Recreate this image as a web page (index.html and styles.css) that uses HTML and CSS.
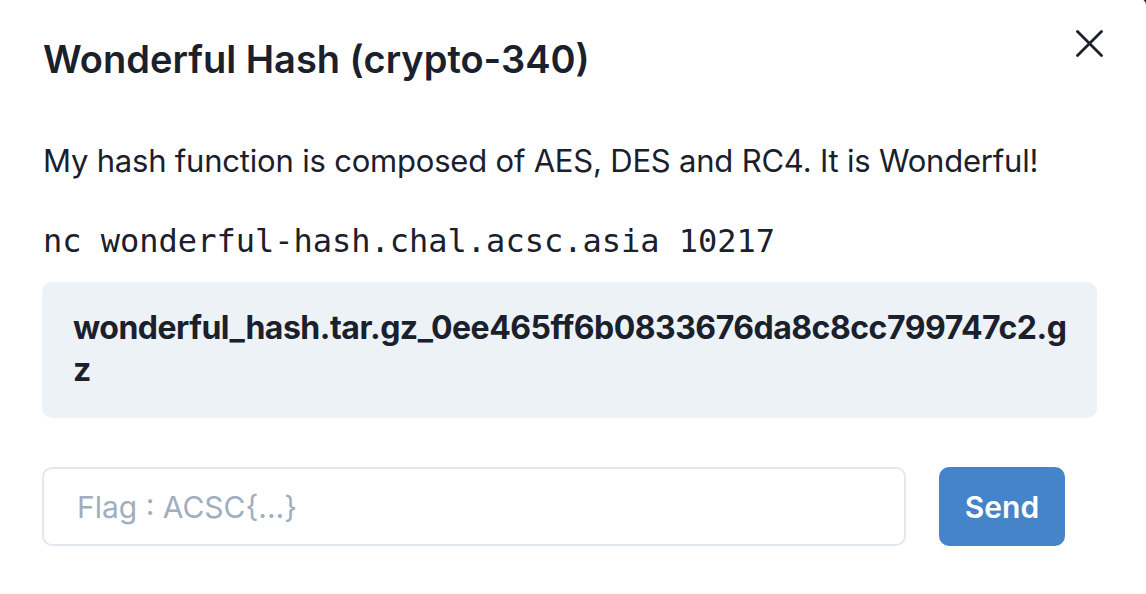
FILE: index.html
```html
<!DOCTYPE html>
<html>
<head>
<meta charset="utf-8">
<link rel="stylesheet" href="styles.css">
</head>
<body>
<div class="modal">
  <header class="header">
    <h2 class="title">Wonderful Hash (crypto-340)</h2>
    <button class="close" aria-label="Close">
      <svg width="27" height="27" viewBox="0 0 27 27"><path d="M1.5 1.5L25.5 25.5M25.5 1.5L1.5 25.5" stroke="#1a202c" stroke-width="2.8" stroke-linecap="round"/></svg>
    </button>
  </header>
  <div class="body">
    <p class="desc">My hash function is composed of AES, DES and RC4. It is Wonderful!</p>
    <p class="cmd">nc wonderful-hash.chal.acsc.asia 10217</p>
    <div class="files">
      <a class="file">wonderful_hash.tar.gz_0ee465ff6b0833676da8c8cc799747c2.gz</a>
    </div>
    <form class="flag-row">
      <input class="flag" type="text" placeholder="Flag : ACSC{...}">
      <button class="send" type="button">Send</button>
    </form>
  </div>
</div>
</body>
</html>
```

FILE: styles.css
```css
html, body {
  margin: 0;
  padding: 0;
}
body {
  background: #1c2538;
  font-family: Inter, "Noto Sans", sans-serif;
  color: #1a202c;
  overflow: hidden;
}
.modal {
  background: #fff;
  margin-top: -1px;
  height: 596px;
  border-top-right-radius: 6px;
  box-sizing: border-box;
}
.header {
  display: flex;
  justify-content: space-between;
  align-items: flex-start;
  padding: 38px 43px 0 43px;
}
.title {
  margin: 0;
  font-size: 38px;
  line-height: 44px;
  font-weight: 600;
  letter-spacing: 0;
}
.close {
  border: 0;
  background: none;
  padding: 0;
  margin-top: -7px;
  margin-right: 0;
  width: 27px;
  height: 27px;
  display: flex;
}
.body {
  padding: 0 49px 0 42px;
}
.desc {
  margin: 60px 0 0 1px;
  font-size: 31px;
  line-height: 40px;
  letter-spacing: -0.2px;
}
.cmd {
  margin: 40px 0 0 1px;
  font-family: "DejaVu Sans Mono", monospace;
  font-size: 32px;
  line-height: 40px;
}
.files {
  margin-top: 21px;
  background: #edf2f7;
  border-radius: 10px;
  padding: 25px 24px 27px 31px;
}
.file {
  display: block;
  font-size: 32px;
  line-height: 42px;
  font-weight: 700;
  word-break: break-all;
  letter-spacing: -0.5px;
}
.flag-row {
  display: flex;
  gap: 33px;
  margin-top: 49px;
  padding-right: 32px;
}
.flag {
  flex: 1;
  height: 79px;
  box-sizing: border-box;
  border: 2px solid #e2e8f0;
  border-radius: 10px;
  padding: 0 33px;
  font-family: Inter, "Noto Sans", sans-serif;
  font-size: 30px;
  color: #1a202c;
  outline: none;
}
.flag::placeholder {
  color: #a0aec0;
}
.send {
  width: 126px;
  height: 79px;
  border: 0;
  border-radius: 10px;
  background: #4684c9;
  color: #fff;
  font-family: Inter, "Noto Sans", sans-serif;
  font-size: 30px;
  font-weight: 600;
}
```
